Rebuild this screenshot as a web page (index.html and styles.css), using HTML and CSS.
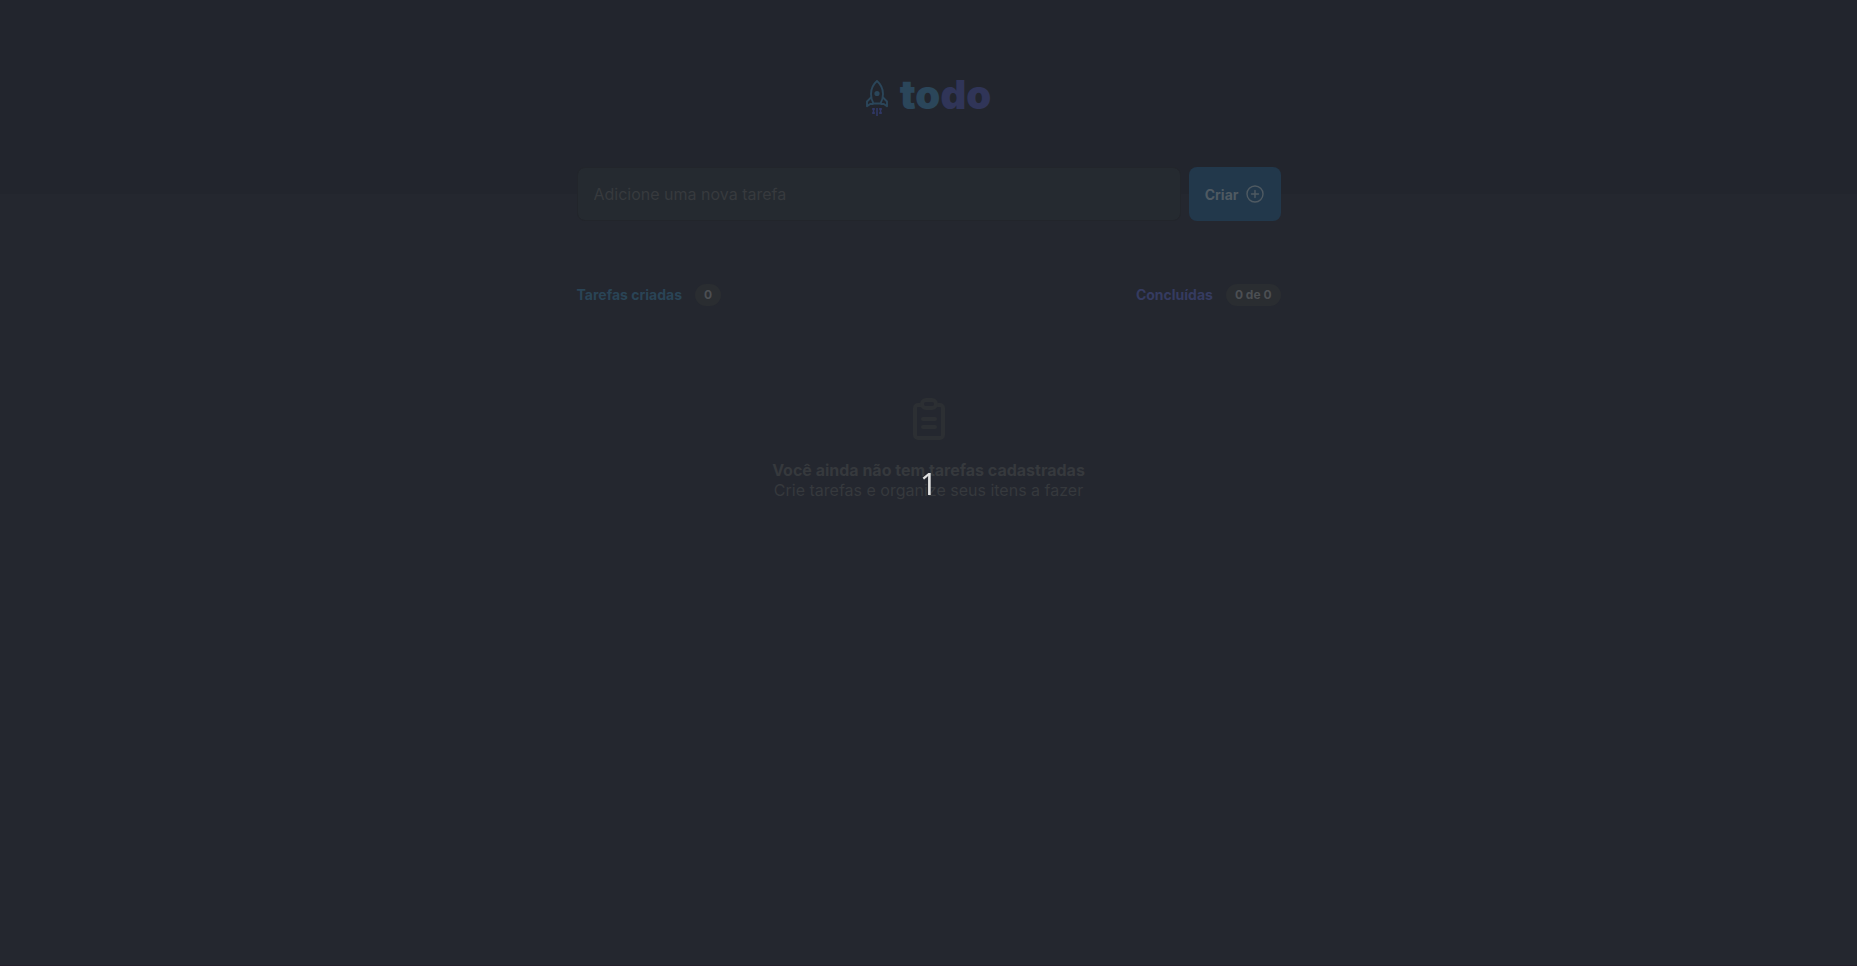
FILE: index.html
```html
<!DOCTYPE html>
<html lang="pt-BR">
<head>
<meta charset="utf-8">
<title>Todo</title>
<link rel="stylesheet" href="styles.css">
</head>
<body>
<header class="header">
  <div class="logo">
    <svg class="rocket" viewBox="0 0 22 36" fill="none" aria-hidden="true">
      <g stroke="#2b465a" stroke-width="1.900" stroke-linejoin="round">
        <path d="M11 1C7.500 4 5 9 5 14c0 3.500 1 7 2.500 9.500h7C16 21 17 17.500 17 14c0-5-2.500-10-6-13Z"/>
        <path d="M5.500 17 1 21.500v4.700l3.200-2.200h3.300M16.500 17l4.500 4.500v4.700l-3.200-2.200h-3.300"/>
      </g>
      <circle cx="11" cy="13.500" r="2.600" fill="#2b465a"/>
      <path d="M7.500 28v6M11 28v8M14.500 28v6M6 29h3M6 33h3M13 29h3M13 33h3" stroke="#303764" stroke-width="1.600"/>
    </svg>
    <h1 class="wordmark">to<span class="wordmark-end">do</span></h1>
  </div>
</header>
<main class="content">
  <form class="task-form">
    <input class="task-input" type="text" placeholder="Adicione uma nova tarefa" aria-label="Nova tarefa">
    <button class="create" type="button">Criar
      <svg class="plus" viewBox="0 0 18 18" fill="none" stroke="currentColor" stroke-width="1.400" stroke-linecap="round" aria-hidden="true"><circle cx="9" cy="9" r="8"/><path d="M9 5.500v7M5.500 9h7"/></svg>
    </button>
  </form>
  <section class="tasks">
    <div class="summary">
      <p class="stat created">Tarefas criadas <span class="count">0</span></p>
      <p class="stat done">Concluídas <span class="count">0 de 0</span></p>
    </div>
    <div class="empty">
      <svg class="clipboard" viewBox="0 0 56 56" fill="none" stroke="currentColor" stroke-width="4" stroke-linecap="round" stroke-linejoin="round" aria-hidden="true">
        <path d="M21 14h-4a3 3 0 0 0-3 3v27a3 3 0 0 0 3 3h22a3 3 0 0 0 3-3V17a3 3 0 0 0-3-3h-4"/>
        <rect x="21" y="9" width="14" height="8" rx="4"/>
        <path d="M22 28h12M22 36h12"/>
      </svg>
      <p class="empty-text"><strong>Você ainda não tem tarefas cadastradas</strong></p>
      <p class="empty-text">Crie tarefas e organize seus itens a fazer</p>
    </div>
  </section>
</main>
<div class="overlay">1</div>
</body>
</html>
```
FILE: styles.css
```css
* { box-sizing: border-box; margin: 0; padding: 0; }
body {
  min-height: 100vh;
  background: #24272f;
  border-bottom: 1px solid #241f2b;
  font-family: Inter, "Liberation Sans", sans-serif;
  font-size: 16px;
  color: #36393d;
}
.header {
  height: 194px;
  background: #22252d;
  display: flex;
  justify-content: center;
  padding-top: 71px;
}
.logo { display: flex; align-items: flex-start; gap: 12px; height: 48px; }
.rocket { width: 22px; height: 36px; margin-top: 9px; }
.wordmark { font-size: 40px; line-height: 48px; font-weight: 900; color: #2b465a; }
.wordmark-end { color: #303558; }
.content { width: 100%; max-width: 704px; margin: -27px auto 0; }
.task-form { display: flex; gap: 8px; }
.task-input {
  flex: 1;
  min-width: 0;
  height: 54px;
  padding: 0 16px;
  border: 1px solid #22252b;
  border-radius: 8px;
  background: #252a30;
  font: inherit;
  color: #4d5358;
}
.task-input::placeholder { color: #373a3e; opacity: 1; }
.create {
  display: flex;
  align-items: center;
  gap: 7px;
  height: 54px;
  padding: 0 17px 0 16px;
  border: 0;
  border-radius: 8px;
  background: #22384b;
  color: #4f5a62;
  font: bold 14px Inter, "Liberation Sans", sans-serif;
}
.plus { width: 18px; height: 18px; }
.tasks { margin-top: 63px; }
.summary { display: flex; justify-content: space-between; }
.stat { display: flex; align-items: center; gap: 13px; font-size: 14px; line-height: 16px; font-weight: 700; }
.created { color: #2a4456; }
.done { color: #353b60; }
.count {
  padding: 3px 9px;
  border-radius: 11px;
  background: #2a2d31;
  color: #4c4f53;
  font-size: 12px;
  line-height: 16px;
}
.empty { display: flex; flex-direction: column; align-items: center; padding-top: 85px; }
.clipboard { width: 56px; height: 56px; margin-bottom: 13px; color: #2c2f33; }
.empty-text { line-height: 20px; }
.overlay {
  position: fixed;
  inset: 0;
  display: flex;
  align-items: center;
  justify-content: center;
  color: #e0e0e0;
  font: 30px "Noto Sans", sans-serif;
}
```
